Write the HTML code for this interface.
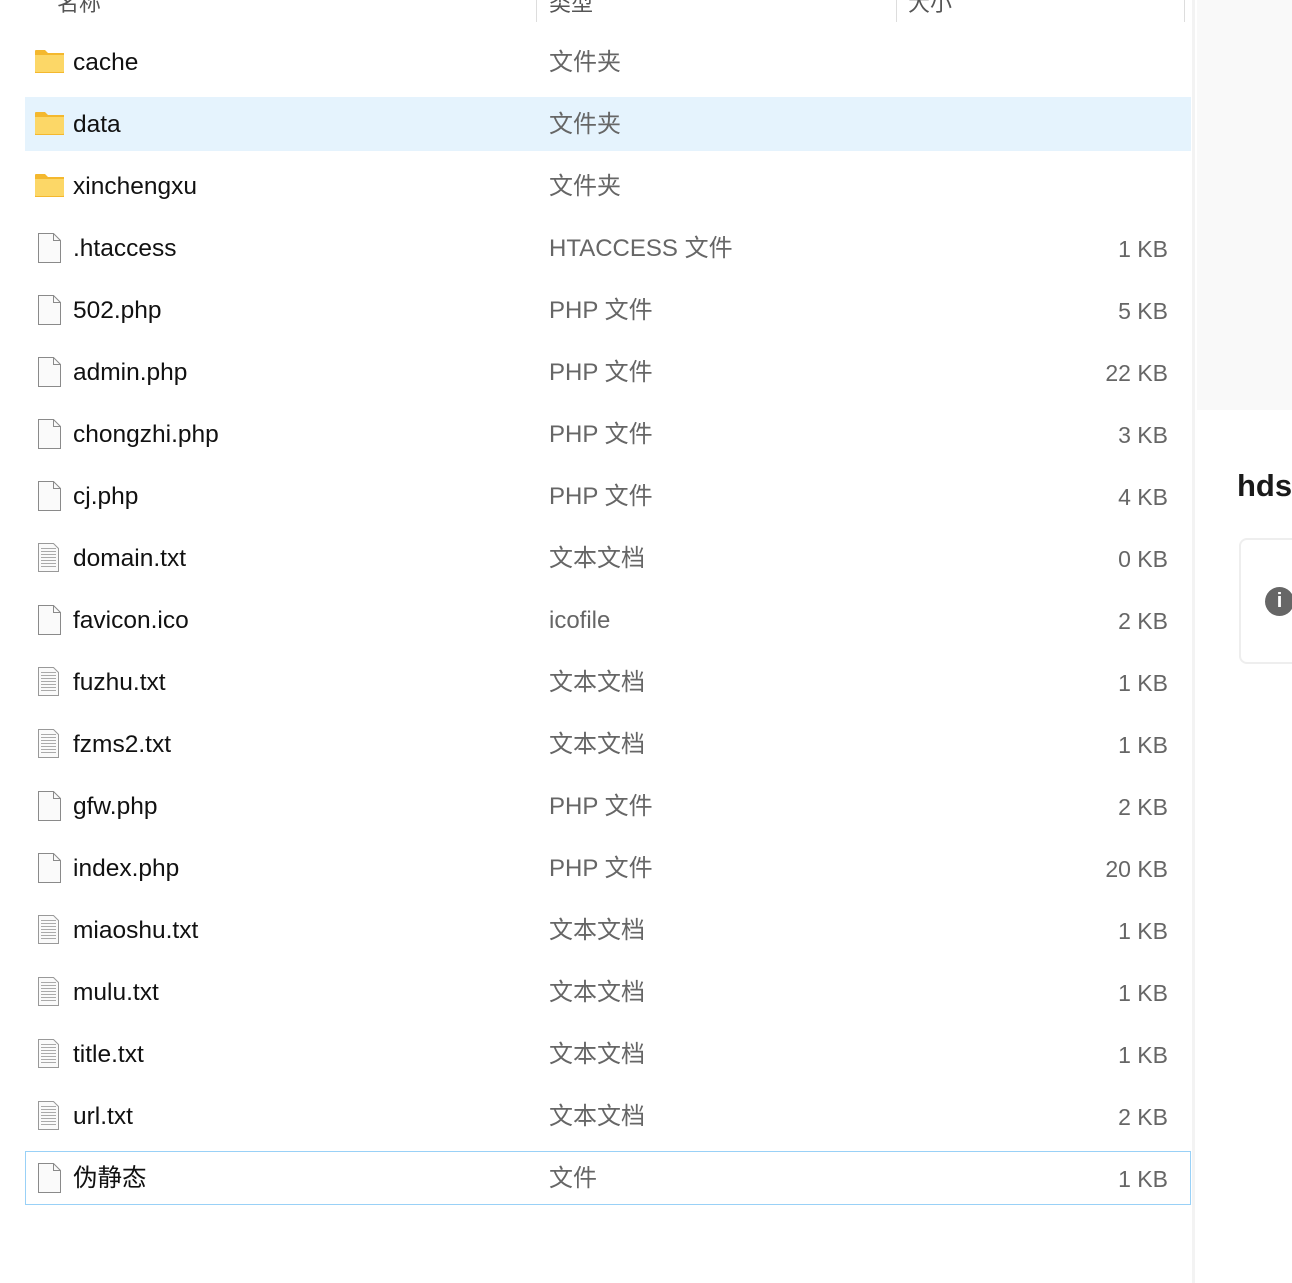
<!DOCTYPE html>
<html><head><meta charset="utf-8"><style>
body{margin:0;width:1292px;height:1283px;overflow:hidden;background:#fff;font-family:"Liberation Sans","Noto Sans CJK SC",sans-serif;position:relative}
.hdr{position:absolute;top:-14px;font-size:22px;color:#555}
.sep{position:absolute;top:0;width:1px;height:22px;background:#ddd}
.row{position:absolute;left:25px;width:1166px;height:54px}
.row .ic{position:absolute;left:12px;top:12px}
.row .n,.row .t,.row .s{position:absolute;top:1px;height:54px;line-height:54px;white-space:nowrap}
.row .n{left:48px;font-size:24.5px;color:#111}
.row .t{left:524px;font-size:24px;color:#666}
.row .s{right:23px;font-size:23px;color:#666}
.sel{background:#e5f3fd}
.foc{border:1px solid #99d1f7;box-sizing:border-box}
.foc .ic{left:11px;top:11px}.foc .n,.foc .t,.foc .s{top:0}.foc .n{left:47px}.foc .t{left:523px}.foc .s{right:22px}
</style></head><body>
<div class="hdr" style="left:57px">名称</div>
<div class="hdr" style="left:549px">类型</div>
<div class="hdr" style="left:908px">大小</div>
<div class="sep" style="left:536px"></div><div class="sep" style="left:896px"></div><div class="sep" style="left:1184px"></div>
<div style="position:absolute;left:1192px;top:0;width:3px;height:1283px;background:#f3f3f3"></div>
<div style="position:absolute;left:1197px;top:0;width:95px;height:410px;background:#f9f9f9"></div>
<div style="position:absolute;left:1237px;top:468px;font-size:31px;font-weight:bold;color:#1a1a1a">hdss</div>
<div style="position:absolute;left:1239px;top:538px;width:80px;height:126px;border:2px solid #eee;border-radius:8px;box-sizing:border-box"></div>
<div style="position:absolute;left:1265px;top:587px;width:29px;height:29px;border-radius:50%;background:#666;color:#fff;font-size:20px;font-weight:bold;text-align:center;line-height:29px">i</div>
<div id="list"></div>
<script>
var F='<svg class="ic" width="26" height="30" viewBox="0 0 26 30"><path d="M1.5 0.5h15l7 7v22h-22z" fill="#fafafa" stroke="#8a8a8a"/><path d="M16.5 0.5v7h7" fill="none" stroke="#8a8a8a"/></svg>';
var T='<svg class="ic" width="26" height="30" viewBox="0 0 26 30"><path d="M1.5 0.5h15l5 5v23h-20z" fill="#fafafa" stroke="#999"/><g stroke="#aaa">'+[5,8,11,14,17,20,23].map(function(y){return '<path d="M4 '+(y+.5)+'h15"/>'}).join('')+'</g></svg>';
var D='<svg class="ic" width="30" height="26" viewBox="0 0 30 26" style="left:10px;top:14px"><path d="M0 2a1 1 0 0 1 1-1h9l3 3h16v20H0z" fill="#f4b82e"/><path d="M0 6h29v16a1 1 0 0 1-1 1H1a1 1 0 0 1-1-1z" fill="#fcd767"/></svg>';
var rows=[[D,'cache','文件夹',''],[D,'data','文件夹',''],[D,'xinchengxu','文件夹',''],[F,'.htaccess','HTACCESS 文件','1 KB'],[F,'502.php','PHP 文件','5 KB'],[F,'admin.php','PHP 文件','22 KB'],[F,'chongzhi.php','PHP 文件','3 KB'],[F,'cj.php','PHP 文件','4 KB'],[T,'domain.txt','文本文档','0 KB'],[F,'favicon.ico','icofile','2 KB'],[T,'fuzhu.txt','文本文档','1 KB'],[T,'fzms2.txt','文本文档','1 KB'],[F,'gfw.php','PHP 文件','2 KB'],[F,'index.php','PHP 文件','20 KB'],[T,'miaoshu.txt','文本文档','1 KB'],[T,'mulu.txt','文本文档','1 KB'],[T,'title.txt','文本文档','1 KB'],[T,'url.txt','文本文档','2 KB'],[F,'伪静态','文件','1 KB']];
var h='';rows.forEach(function(r,i){var c=i==1?' sel':(i==18?' foc':'');h+='<div class="row'+c+'" style="top:'+(35+62*i)+'px">'+r[0]+'<div class="n">'+r[1]+'</div><div class="t">'+r[2]+'</div><div class="s">'+r[3]+'</div></div>';});
document.getElementById('list').innerHTML=h;
</script>
</body></html>
